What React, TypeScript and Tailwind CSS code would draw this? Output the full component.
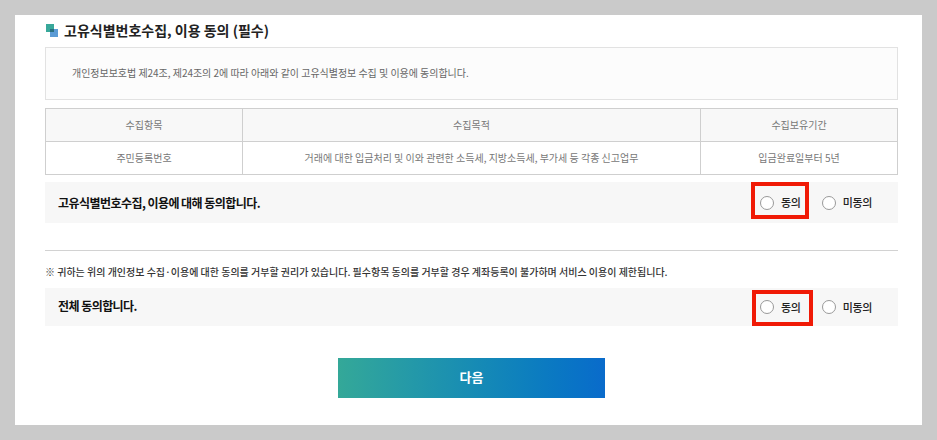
const FONT = "font-['Noto_Sans_CJK_KR','Noto_Sans',sans-serif]";

function Radio({ label }: { label: string }) {
  return (
    <div className="flex items-center gap-[7px]">
      <span className="w-[14px] h-[14px] shrink-0 rounded-full border border-[#999] bg-white" />
      <span className="text-[11px] font-medium leading-none text-[#222] tracking-[-0.3px]">{label}</span>
    </div>
  );
}

function AgreeBar({ text, className, boxClass, textClass }: { text: string; className: string; boxClass: string; textClass: string }) {
  return (
    <div className={`relative flex items-center justify-between bg-[#f7f7f7] pl-[13px] ${className}`}>
      <p className={`text-[12px] font-bold text-[#111] tracking-[-0.55px] ${textClass}`}>{text}</p>
      <div className="flex items-center gap-[21px] w-[138px]">
        <Radio label="동의" />
        <Radio label="미동의" />
      </div>
      <div className={`absolute border-[4px] border-[#f01a06] ${boxClass}`} />
    </div>
  );
}

export default function App() {
  return (
    <div className={`w-[937px] h-[440px] overflow-hidden bg-[#cacaca] p-[15px] ${FONT}`}>
      <div className="h-[410px] bg-white pl-[30px] pr-[24px]">
        <div className="flex items-center h-[32px] gap-[6px] pb-[2px]">
          <svg width="13" height="13" viewBox="0 0 13 13" className="shrink-0">
            <rect x="5" y="5" width="8" height="8" fill="#5b9bd5" />
            <rect x="1" y="0" width="8" height="8" fill="#38a89a" />
            <rect x="5" y="5" width="4" height="3" fill="#2a6f80" />
          </svg>
          <h2 className="text-[14px] font-bold text-[#222]">고유식별번호수집, 이용 동의 (필수)</h2>
        </div>

        <div className="h-[53px] border border-[#e2e2e2] bg-[#fcfcfc] pl-[26px] pb-[2px] flex items-center">
          <p className="text-[10px] text-[#666] tracking-[-0.03px]">
            개인정보보호법 제24조, 제24조의 2에 따라 아래와 같이 고유식별정보 수집 및 이용에 동의합니다.
          </p>
        </div>

        <div className="mt-[8px] border border-[#cfcfcf] text-[10px] text-[#777] text-center">
          <div className="grid grid-cols-[197px_458px_1fr] h-[33px] items-stretch bg-[#f8f8f8] border-b border-[#cfcfcf]">
            <div className="flex items-center justify-center pb-[2px] border-r border-[#cfcfcf]">수집항목</div>
            <div className="flex items-center justify-center pb-[2px] border-r border-[#cfcfcf]">수집목적</div>
            <div className="flex items-center justify-center pb-[2px]">수집보유기간</div>
          </div>
          <div className="grid grid-cols-[197px_458px_1fr] h-[32px] items-stretch">
            <div className="flex items-center justify-center pb-[2px] border-r border-[#cfcfcf]">주민등록번호</div>
            <div className="flex items-center justify-center pb-[2px] border-r border-[#cfcfcf]">
              거래에 대한 입금처리 및 이와 관련한 소득세, 지방소득세, 부가세 등 각종 신고업무
            </div>
            <div className="flex items-center justify-center pb-[2px]">입금완료일부터 5년</div>
          </div>
        </div>

        <AgreeBar
          text="고유식별번호수집, 이용에 대해 동의합니다."
          className="mt-[7px] h-[41px]"
          textClass=""
          boxClass="left-[706px] top-0 w-[58px] h-[37px]"
        />

        <div className="mt-[27px] border-t border-[#d2d2d2]" />

        <p className="mt-[13px] h-[16px] leading-[16px] text-[10px] font-medium text-[#333] tracking-[-0.01px]">
          ※ 귀하는 위의 개인정보 수집·이용에 대한 동의를 거부할 권리가 있습니다. 필수항목 동의를 거부할 경우 계좌등록이 불가하며 서비스 이용이 제한됩니다.
        </p>

        <AgreeBar
          text="전체 동의합니다."
          className="mt-[8px] h-[38px]"
          textClass="pb-[2px]"
          boxClass="left-[707px] top-[2px] w-[61px] h-[36px]"
        />

        <div className="mt-[32px] flex justify-center">
          <button className="w-[267px] h-[40px] pb-[3px] bg-gradient-to-r from-[#34a898] to-[#0a6bcb] text-white text-[13px] font-bold">
            다음
          </button>
        </div>
      </div>
    </div>
  );
}
